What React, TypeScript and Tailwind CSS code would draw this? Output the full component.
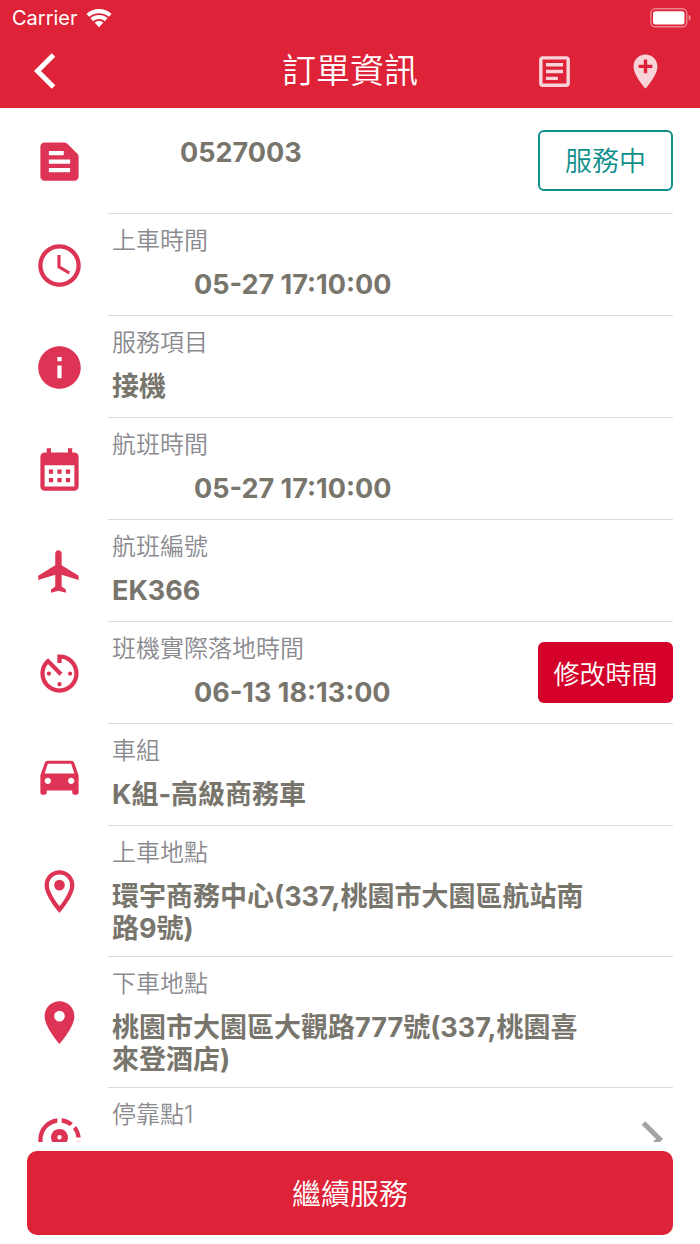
import type { ReactNode } from "react";
import type { IconType } from "react-icons";
import {
  MdAccessTime,
  MdAddLocation,
  MdAvTimer,
  MdCalendarMonth,
  MdDirectionsCar,
  MdFlight,
  MdInfo,
  MdLocationOn,
  MdOutlineArticle,
  MdOutlineLocationOn,
  MdShareLocation,
  MdTextSnippet,
} from "react-icons/md";

type Item = {
  icon: IconType;
  label: string;
  value: string;
  isDate?: boolean;
  action?: ReactNode;
};

const items: Item[] = [
  { icon: MdAccessTime, label: "上車時間", value: "05-27 17:10:00", isDate: true },
  { icon: MdInfo, label: "服務項目", value: "接機" },
  { icon: MdCalendarMonth, label: "航班時間", value: "05-27 17:10:00", isDate: true },
  { icon: MdFlight, label: "航班編號", value: "EK366" },
  {
    icon: MdAvTimer,
    label: "班機實際落地時間",
    value: "06-13 18:13:00",
    isDate: true,
    action: (
      <button className="h-[61px] w-[135px] shrink-0 rounded-md bg-[#d50029] pt-1 text-[26px] font-[350] text-white">
        修改時間
      </button>
    ),
  },
  { icon: MdDirectionsCar, label: "車組", value: "K組-高級商務車" },
  {
    icon: MdOutlineLocationOn,
    label: "上車地點",
    value: "環宇商務中心(337,桃園市大園區航站南路9號)",
  },
  {
    icon: MdLocationOn,
    label: "下車地點",
    value: "桃園市大園區大觀路777號(337,桃園喜來登酒店)",
  },
];

function Chevron({ className }: { className?: string }) {
  return (
    <svg
      width="22"
      height="36"
      viewBox="0 0 22 36"
      fill="none"
      stroke="currentColor"
      strokeWidth="5"
      className={className}
    >
      <path d="M19.5 2L3.5 18l16 16" />
    </svg>
  );
}

function StatusBar() {
  return (
    <div className="flex h-9 items-center justify-between pr-2 pl-3">
      <div className="flex items-center gap-2">
        <span className="text-xl">Carrier</span>
        <svg width="26" height="19" viewBox="0 0 26 19" fill="currentColor">
          <path d="M13 0C8.2 0 3.9 1.8 0.4 4.9L3.2 7.8C5.8 5.5 9.2 4.2 13 4.2s7.2 1.3 9.8 3.6l2.8-2.9C22.1 1.8 17.8 0 13 0z" />
          <path d="M13 6c-3.3 0-6.3 1.2-8.6 3.2l2.9 3c1.5-1.3 3.5-2.1 5.7-2.1s4.2.8 5.7 2.1l2.9-3C19.3 7.2 16.3 6 13 6z" />
          <path d="M13 12c-1.7 0-3.2.6-4.4 1.6L13 18.3l4.4-4.7C16.2 12.6 14.7 12 13 12z" />
        </svg>
      </div>
      <svg width="42" height="20" viewBox="0 0 42 20">
        <rect x="0.8" y="0.8" width="36" height="18" rx="4.5" fill="none" stroke="white" strokeOpacity="0.45" strokeWidth="1.4" />
        <rect x="3" y="3.2" width="31.5" height="13.2" rx="2.5" fill="white" />
        <path d="M38.6 6.8c1.3.4 2.1 1.6 2.1 3s-.8 2.6-2.1 3z" fill="white" fillOpacity="0.5" />
      </svg>
    </div>
  );
}

function Row({
  icon: Icon,
  children,
  action,
}: {
  icon: IconType;
  children: ReactNode;
  action?: ReactNode;
}) {
  return (
    <li className="flex">
      <div className="flex w-27 shrink-0 items-center justify-center pl-2.5 text-[#dd3355]">
        <Icon size={51} />
      </div>
      <div className="flex min-w-0 flex-1 items-center border-b border-[#dadada] pl-1">
        <div className="min-w-0 flex-1 self-stretch">{children}</div>
        {action}
      </div>
    </li>
  );
}

export default function App() {
  return (
    <div className="flex h-screen flex-col bg-white font-['Inter','Noto_Sans_CJK_TC',sans-serif]">
      <header className="shrink-0 bg-[#de2237] pb-0.5 text-white">
        <StatusBar />
        <div className="grid h-[70px] grid-cols-[1fr_auto_1fr] items-center px-[34px]">
          <button aria-label="返回" className="justify-self-start">
            <Chevron />
          </button>
          <h1 className="text-[34px] leading-[48px] font-[350]">訂單資訊</h1>
          <div className="flex justify-end gap-[50px] text-white/80">
            <button aria-label="訂單內容">
              <MdOutlineArticle size={41} />
            </button>
            <button aria-label="新增地點">
              <MdAddLocation size={41} />
            </button>
          </div>
        </div>
      </header>

      <main className="min-h-0 flex-1 overflow-y-auto [scrollbar-width:none]">
        <ul className="pr-[27px]">
          <Row
            icon={MdTextSnippet}
            action={
              <button className="h-[61px] w-[135px] shrink-0 rounded-md border-2 border-[#0f8f8a] pt-1 text-[27px] font-[350] text-[#0f8f8a]">
                服務中
              </button>
            }
          >
            <p className="min-h-[105px] pt-[29px] pl-17 text-[27px] leading-8 font-bold text-[#78756d]">
              0527003
            </p>
          </Row>

          {items.map((item) => (
            <Row key={item.label} icon={item.icon} action={item.action}>
              <div
                className={
                  item.action ? "min-h-[101px] py-[11px]" : "min-h-[101px] py-[11px] pr-18"
                }
              >
                <p className="text-2xl leading-8 font-[350] text-[#8a8a8f]">{item.label}</p>
                <p
                  className={`mt-3 text-[27px] leading-8 font-bold text-[#78756d] ${
                    item.isDate ? "pl-[82px]" : ""
                  }`}
                >
                  {item.value}
                </p>
              </div>
            </Row>
          ))}

          <Row
            icon={MdShareLocation}
            action={
              <button aria-label="查看停靠點" className="pr-2.5 text-[#a3a3a5]">
                <Chevron className="rotate-180" />
              </button>
            }
          >
            <p className="min-h-[101px] pt-[11px] text-2xl leading-8 font-[350] text-[#8a8a8f]">
              停靠點1
            </p>
          </Row>
        </ul>
      </main>

      <footer className="shrink-0 px-[27px] py-[9px]">
        <button className="h-[84px] w-full rounded-[10px] bg-[#de2237] pt-1 text-[29px] font-[350] text-white">
          繼續服務
        </button>
      </footer>
    </div>
  );
}
